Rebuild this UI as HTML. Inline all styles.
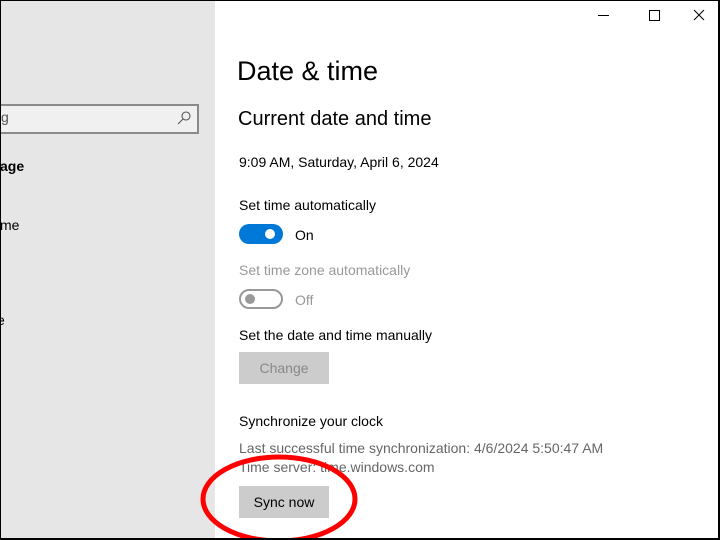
<!DOCTYPE html>
<html><head><meta charset="utf-8"><style>
html,body{margin:0;padding:0}
body{width:720px;height:540px;position:relative;overflow:hidden;background:#fff;font-family:"Liberation Sans",sans-serif;color:#000}
.frame{position:absolute;left:0;top:0;width:717px;height:537px;border-left:1px solid #000;border-top:1px solid #000;border-right:2px solid #000;border-bottom:2px solid #000}
.side{position:absolute;left:1px;top:1px;width:214px;height:537px;background:#e6e6e6}
.search{position:absolute;left:-4px;top:103px;width:198px;height:26px;border:2px solid #8a8a8a;background:#f0f0f0}
.t{position:absolute;white-space:nowrap}
.btn{position:absolute;background:#cccccc;width:90px;height:32px;font-size:14px;text-align:center;line-height:32px}
</style></head><body>
<div class="side">
<div class="search"><span class="t" style="left:2px;top:3px;font-size:14px;color:#555">g</span>
<svg style="position:absolute;left:178px;top:5px" width="14" height="14"><circle cx="9" cy="5" r="4" fill="none" stroke="#555" stroke-width="1.1"/><line x1="6" y1="8" x2="1" y2="13" stroke="#555" stroke-width="1.1"/></svg></div>
<span class="t" style="left:-1px;top:157px;font-size:14px;font-weight:bold">age</span>
<span class="t" style="left:-1px;top:216px;font-size:14px">me</span>
<span class="t" style="left:-4px;top:311px;font-size:14px">e</span>
</div>
<svg style="position:absolute;left:590px;top:6px" width="125" height="20">
<line x1="8" y1="9.5" x2="19" y2="9.5" stroke="#000"/>
<rect x="59.5" y="4.5" width="10" height="10" fill="none" stroke="#000"/>
<path d="M104 4L114 14M114 4L104 14" stroke="#000"/></svg>
<span class="t" style="left:237px;top:56px;font-size:27px">Date &amp; time</span>
<span class="t" style="left:238px;top:108px;font-size:20px">Current date and time</span>
<span class="t" style="left:239px;top:154px;font-size:14px">9:09 AM, Saturday, April 6, 2024</span>
<span class="t" style="left:239px;top:197px;font-size:14px">Set time automatically</span>
<div style="position:absolute;left:239px;top:224px;width:44px;height:20px;border-radius:10px;background:#0078d7"></div>
<div style="position:absolute;left:265px;top:229px;width:10px;height:10px;border-radius:5px;background:#fff"></div>
<span class="t" style="left:295px;top:227px;font-size:14px">On</span>
<span class="t" style="left:239px;top:262px;font-size:14px;color:#999">Set time zone automatically</span>
<div style="position:absolute;left:239px;top:289px;width:40px;height:16px;border-radius:10px;border:2px solid #999"></div>
<div style="position:absolute;left:245px;top:294px;width:10px;height:10px;border-radius:5px;background:#999"></div>
<span class="t" style="left:295px;top:292px;font-size:14px;color:#999">Off</span>
<span class="t" style="left:239px;top:327px;font-size:14px">Set the date and time manually</span>
<div class="btn" style="left:239px;top:352px;color:#888">Change</div>
<span class="t" style="left:239px;top:413px;font-size:14px">Synchronize your clock</span>
<span class="t" style="left:239px;top:440px;font-size:14px;color:#666">Last successful time synchronization: 4/6/2024 5:50:47 AM</span>
<span class="t" style="left:239px;top:459px;font-size:14px;color:#666">Time server: time.windows.com</span>
<div class="btn" style="left:239px;top:486px">Sync now</div>
<svg style="position:absolute;left:0;top:0" width="720" height="540"><ellipse cx="279" cy="499" rx="76" ry="42" fill="none" stroke="#f00" stroke-width="5"/></svg>
<div class="frame"></div>
</body></html>
